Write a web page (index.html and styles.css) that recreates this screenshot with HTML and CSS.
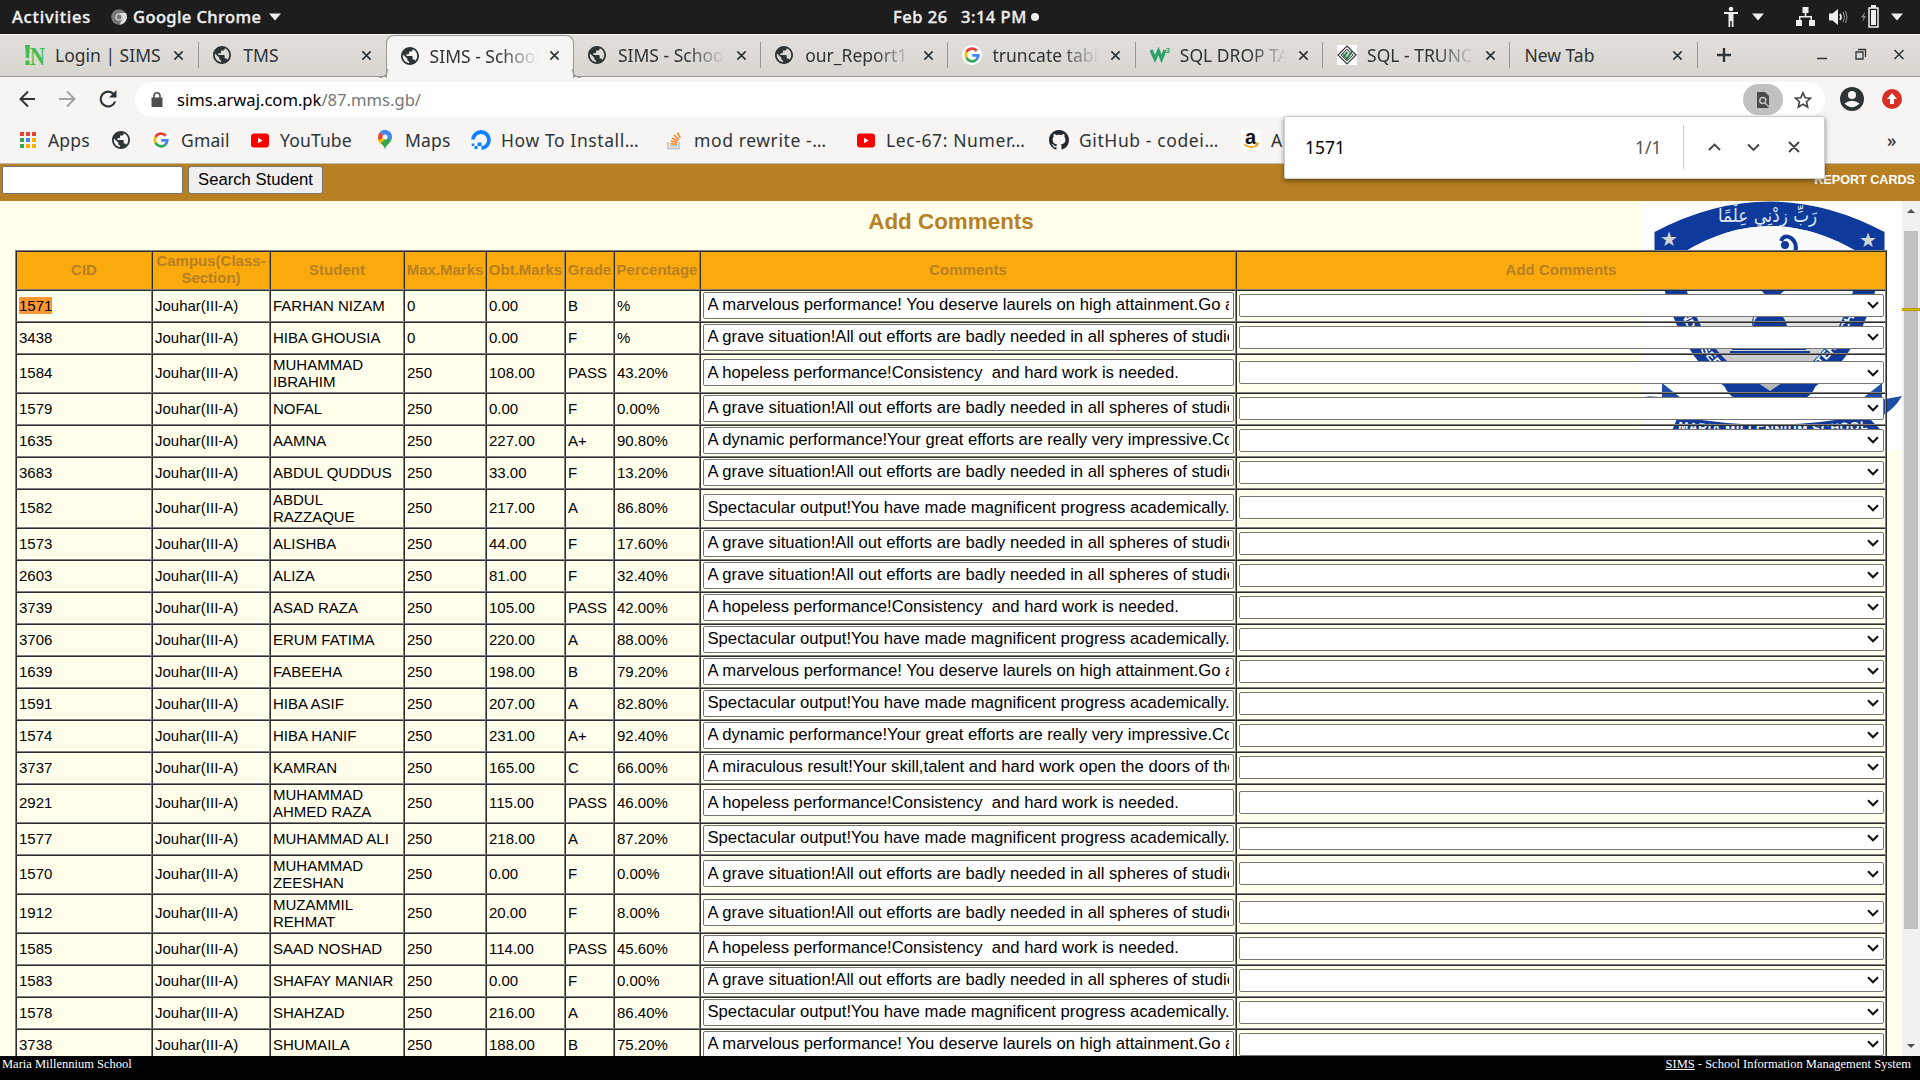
FILE: index.html
```html
<!DOCTYPE html>
<html lang="en">
<head>
<meta charset="utf-8">
<title>SIMS - School Information Management System</title>
<link rel="stylesheet" href="styles.css">
</head>
<body>
<svg class="defs" width="0" height="0">
  <symbol id="globe" viewBox="2 2 20 20"><path d="M12 2C6.480 2 2 6.480 2 12s4.480 10 10 10 10-4.480 10-10S17.520 2 12 2zm-1 17.930c-3.950-.490-7-3.850-7-7.930 0-.620.080-1.210.210-1.790L9 15v1c0 1.100.900 2 2 2v1.930zm6.900-2.540c-.260-.810-1-1.390-1.900-1.390h-1v-3c0-.550-.450-1-1-1H8v-2h2c.550 0 1-.450 1-1V7h2c1.100 0 2-.900 2-2v-.410c2.930 1.190 5 4.060 5 7.410 0 2.080-.800 3.970-2.100 5.390z" fill="#2e3436"/></symbol>
  <symbol id="google" viewBox="0 0 20 20"><circle cx="10" cy="10" r="10" fill="#fff"/><g fill="none" stroke-width="2.800"><path d="M14.800 5.700A6.300 6.300 0 0 0 4.500 7.100" stroke="#ea4335"/><path d="M4.500 7.100a6.300 6.300 0 0 0 0 5.800" stroke="#fbbc05"/><path d="M4.500 12.900A6.300 6.300 0 0 0 14.300 14.700" stroke="#34a853"/><path d="M14.300 14.700A6.300 6.300 0 0 0 16.300 10.300H10.200" stroke="#4285f4"/></g></symbol>
  <symbol id="youtube" viewBox="0 0 20 20"><rect x="1" y="3.500" width="18" height="14" rx="3" fill="#f00"/><path d="M8 7.800v5.400l4.600-2.700z" fill="#fff"/></symbol>
  <symbol id="x" viewBox="0 0 12 12"><path d="M1.500 1.500l9 9m0-9l-9 9" fill="none" stroke="currentColor" stroke-width="1.800"/></symbol>
  <symbol id="tri" viewBox="0 0 12 8"><path d="M0 .5h12L6 7.500z" fill="#eee"/></symbol>
  <symbol id="chev" viewBox="0 0 12 8"><path d="M1 1.200l5 5 5-5" fill="none" stroke="#111" stroke-width="2.100"/></symbol>
</svg>

<header class="panel">
  <span class="panel-left"><b>Activities</b>
    <svg width="16" height="16" viewBox="0 0 16 16"><circle cx="8" cy="8" r="7.800" fill="#777"/><path d="M8 4h7a8 8 0 0 1-6.500 11.800l3-6z" fill="#ddd"/><circle cx="8" cy="8" r="3.600" fill="#ddd"/><circle cx="8" cy="8" r="2.500" fill="#777"/></svg>
    <b class="app-name">Google Chrome</b><svg width="12" height="8"><use href="#tri"/></svg></span>
  <span class="clock"><b>Feb 26</b><b>3:14 PM</b><i></i></span>
  <span class="tray">
    <svg width="16" height="22" viewBox="0 0 16 22" fill="#eee"><circle cx="8" cy="3" r="2.300"/><path d="M1 6h14v2h-4.500v13H8.800v-6H7.200v6H5.500V8H1z"/></svg>
    <svg class="t1" width="12" height="8"><use href="#tri"/></svg>
    <svg class="t2" width="19" height="20" viewBox="0 0 19 20" fill="#eee"><path d="M6.500 0h6v6h-2.200v3h5.700v4h3v6h-6v-6h1.500v-2.500h-10V13H6v6H0v-6h3V9h5.700V6H6.500z"/></svg>
    <svg class="t3" width="19" height="18" viewBox="0 0 19 18" fill="#eee"><path d="M0 5.500h3.500L9 1v16l-5.500-4.500H0z"/><path d="M11 6q2 3 0 6" fill="none" stroke="#eee" stroke-width="1.700"/><path d="M14 4q3 5 0 10M16.500 3q3 6 0 12" fill="none" stroke="#999" stroke-width="1"/></svg>
    <svg class="t4" width="18" height="23" viewBox="0 0 18 23"><path d="M4 7L0 12.500h2.500L1.500 17 5 11H3z" fill="#888"/><path d="M8 3h9v19H8z" fill="none" stroke="#eee" stroke-width="1.500"/><path d="M10 0h5v3h-5zM10 5h5v15h-5z" fill="#eee"/></svg>
    <svg class="t5" width="12" height="8"><use href="#tri"/></svg>
  </span>
</header>

<nav class="tabs">
  <div class="tab"><svg width="20" height="20" viewBox="0 0 20 20"><path d="M0 0h5l-1 13H1zM.5 15.500h4V20h-4z" fill="#3fbf4f"/><text x="5" y="19.500" class="fav-n" textLength="15" lengthAdjust="spacingAndGlyphs">N</text></svg><span>Login | SIMS</span><svg class="close"><use href="#x"/></svg></div>
  <div class="tab plain"><svg width="18" height="18"><use href="#globe"/></svg><span>TMS</span><svg class="close"><use href="#x"/></svg></div>
  <div class="tab active"><svg width="18" height="18"><use href="#globe"/></svg><span>SIMS - School</span><svg class="close"><use href="#x"/></svg></div>
  <div class="tab"><svg width="18" height="18"><use href="#globe"/></svg><span>SIMS - School</span><svg class="close"><use href="#x"/></svg></div>
  <div class="tab"><svg width="18" height="18"><use href="#globe"/></svg><span>our_Report1</span><svg class="close"><use href="#x"/></svg></div>
  <div class="tab"><svg width="20" height="20"><use href="#google"/></svg><span>truncate table</span><svg class="close"><use href="#x"/></svg></div>
  <div class="tab"><svg width="20" height="20" viewBox="0 0 20 20"><path d="M1 5l4 9 3.500-8 3 8 3.500-9" fill="none" stroke="#2aa36b" stroke-width="3.200"/><text x="15.500" y="8" class="fav-3">3</text></svg><span>SQL DROP TABLE</span><svg class="close"><use href="#x"/></svg></div>
  <div class="tab"><svg width="20" height="20" viewBox="0 0 20 20"><path d="M0 0h20v20H0z" fill="#fff"/><path d="M10 1l9 9-9 9-9-9z" fill="none" stroke="#333" stroke-width="1.200"/><path d="M10 4l6 6-6 6-6-6z" fill="#c9d3cb" stroke="#444"/><path d="M6 9l4 5 5-8M7 12l3-5" fill="none" stroke="#2e7d4f" stroke-width="1.800"/></svg><span>SQL - TRUNCATE</span><svg class="close"><use href="#x"/></svg></div>
  <div class="tab"><span>New Tab</span><svg class="close"><use href="#x"/></svg></div>
  <svg class="plus" width="16" height="16" viewBox="0 0 16 16"><path d="M8 1v14M1 8h14" stroke="#2e3436" stroke-width="2.400"/></svg>
  <svg class="winctl" width="90" height="20" viewBox="0 0 90 20" fill="none" stroke="#2e3436" stroke-width="1.300"><path d="M1 13.500h10M40 7h7v7h-7zM42 4.500h7.500V12" /><path d="M78.500 5l9 9m0-9l-9 9" stroke-width="1.500"/></svg>
</nav>

<div class="toolbar">
  <svg class="navs" width="100" height="20" viewBox="0 0 100 20" fill="none" stroke-width="2"><path d="M16 10H1.500M9 2.500L1.500 10 9 17.500" stroke="#2e3436"/><path d="M40 10h15.500M48 2.500l7.500 7.500-7.500 7.500" stroke="#a2a3a2"/><path d="M94.500 5a7.400 7.400 0 1 0 1.600 7.500" stroke="#2e3436" stroke-width="2.200"/><path d="M97.500 1v7.500H90z" fill="#2e3436"/></svg>
  <div class="omnibox">
    <svg width="12" height="15" viewBox="0 0 12 15"><path d="M.5 5.500h11V15H.5z" fill="#4d4d4d"/><path d="M3 6V3.800a3 3 0 0 1 6 0V6" fill="none" stroke="#4d4d4d" stroke-width="1.600"/></svg>
    <span class="url">sims.arwaj.com.pk<em>/87.mms.gb/</em></span>
    <span class="findpill"><svg width="14" height="18" viewBox="0 0 14 18"><path d="M1 1h8l4 4v12H1z" fill="#4a4a4a"/><circle cx="6.800" cy="9.500" r="3" fill="none" stroke="#c1c1c1" stroke-width="1.500"/><path d="M9 12l4 4" stroke="#c1c1c1" stroke-width="1.500"/></svg></span>
    <svg class="star" width="18" height="18" viewBox="0 0 18 18"><path d="M9 1.800l2.200 4.900 5.300.5-4 3.500 1.200 5.300L9 13.200 4.300 16l1.200-5.300-4-3.500 5.300-.5z" fill="none" stroke="#444" stroke-width="1.600"/></svg>
  </div>
  <svg class="avatar" width="24" height="24" viewBox="0 0 24 24"><circle cx="12" cy="12" r="12" fill="#2e3436"/><circle cx="12" cy="8" r="4" fill="#f6f5f4"/><path d="M4.500 16.500q7.500-5.500 15 0-7.500 7.500-15 0z" fill="#f6f5f4"/></svg>
  <svg width="20" height="20" viewBox="0 0 20 20"><circle cx="10" cy="10" r="10" fill="#d93025"/><path d="M10 4l5 6h-3v5H8v-5H5z" fill="#fff"/></svg>
</div>

<div class="bookmarks">
  <a><svg viewBox="0 0 20 20"><path d="M2 2h4v4H2zM8 2h4v4H8zM14 2h4v4h-4z" fill="#ea4335"/><path d="M2 8h4v4H2zM2 14h4v4H2z" fill="#34a853"/><path d="M8 8h4v4H8z" fill="#4285f4"/><path d="M14 8h4v4h-4zM8 14h4v4H8zM14 14h4v4h-4z" fill="#fbac05"/></svg>Apps</a>
  <a><svg class="small"><use href="#globe"/></svg></a>
  <a><svg><use href="#google"/></svg>Gmail</a>
  <a><svg><use href="#youtube"/></svg>YouTube</a>
  <a><svg viewBox="0 0 20 20"><path d="M10 20c0-5-7-7-7-13h14c0 6-7 8-7 13z" fill="#34a853"/><path d="M3.200 8.500L10 6v3l-5 5Q3 11 3.200 8.500z" fill="#fbbc05"/><path d="M4 10A7 7 0 0 1 5 2l5 5z" fill="#ea4335"/><path d="M5 2a7 7 0 0 1 12 5l-3 3-6-5z" fill="#4285f4"/><circle cx="10" cy="7" r="2.500" fill="#fff"/></svg>Maps</a>
  <a class="wide"><svg viewBox="0 0 20 20"><path d="M2 9.500A8 8 0 1 1 10.500 18" fill="none" stroke="#0f80ff" stroke-width="3.800"/><path d="M6.500 12.500h4V16h-4zM3.500 16h3v3h-3zM.8 13.500h2.500v2.500H.8z" fill="#0f80ff"/></svg>How To Install…</a>
  <a class="wide"><svg viewBox="0 0 20 20"><path d="M4 12v6.500h11V12M6 16h7" fill="none" stroke="#bcbbbb" stroke-width="1.500"/><path d="M6.500 13.800l6.500.5M6.800 11l6.400 1.400M8 8l5.800 2.900M10 5l4.900 4.500M13.500 2.500l2.700 5.500" stroke="#f48024" stroke-width="1.600"/></svg>mod rewrite -…</a>
  <a class="wide"><svg><use href="#youtube"/></svg>Lec-67: Numer…</a>
  <a class="wide"><svg viewBox="0 0 16 16"><path fill="#24292e" d="M8 0C3.580 0 0 3.580 0 8c0 3.540 2.290 6.530 5.470 7.590.4.070.55-.17.55-.38 0-.19-.01-.82-.01-1.490-2.010.37-2.530-.49-2.690-.94-.09-.23-.48-.94-.82-1.130-.28-.15-.68-.52-.01-.53.63-.01 1.080.58 1.230.82.72 1.210 1.870.87 2.330.66.07-.52.28-.87.51-1.070-1.780-.2-3.640-.89-3.640-3.950 0-.87.31-1.590.82-2.150-.08-.2-.36-1.020.08-2.120 0 0 .67-.21 2.200.82.64-.18 1.320-.27 2-.27s1.360.09 2 .27c1.530-1.040 2.200-.82 2.200-.82.44 1.100.16 1.920.08 2.120.51.56.82 1.270.82 2.150 0 3.070-1.870 3.750-3.650 3.950.29.25.54.73.54 1.480 0 1.070-.01 1.930-.01 2.200 0 .21.15.46.55.38A8.010 8.010 0 0 0 16 8c0-4.420-3.580-8-8-8z"/></svg>GitHub - codei…</a>
  <a><svg viewBox="0 0 20 20"><rect width="20" height="20" rx="3" fill="#fff"/><text x="4" y="14" class="fav-a">a</text><path d="M3 14.500q7 5 13 .5M14 14l3-.5-1 3" fill="none" stroke="#f90" stroke-width="1.500"/></svg>A</a>
  <b class="more">»</b>
</div>

<div class="findbar">
  <span>1571</span><em>1/1</em>
  <svg width="110" height="44" viewBox="0 0 110 44" fill="none" stroke="#444" stroke-width="1.900"><path d="M.5 0v44" stroke="#ccc" stroke-width="1"/><path d="M26 25l5.500-5.500L37 25M65 19.500l5.500 5.500 5.500-5.500M106 17l10 10m0-10l-10 10"/></svg>
</div>

<div class="searchbar"><input class="sbox" type="text"><button>Search Student</button><b>REPORT CARDS</b></div>

<div class="viewport">
  <main class="page">
    <svg class="crest" width="260" height="250" viewBox="2 6 260 250">
      <defs><linearGradient id="g" x1="0" y1="0" x2="0" y2="1"><stop offset="0" stop-color="#fff"/><stop offset="1" stop-color="#b4b4b4"/></linearGradient>
      <path id="arc" d="M38 235Q130 243 230 234"/></defs>
      <path d="M2 6h260v250H2z" fill="#fff"/>
      <path d="M22 86Q40 160 84 191L130 222 176 191Q220 160 238 86z" fill="#0d3a9b"/>
      <path d="M44 86Q58 140 90 169L130 196 170 169Q202 140 216 86z" fill="url(#g)"/>
      <path d="M14.500 37Q130-24 244.500 37v20H218Q130 5 44 57H14.500z" fill="#0d3a9b"/>
      <path d="M45 57Q130 5 217 57z" fill="#fafafa"/>
      <text x="78" y="27" class="arabic" textLength="99" lengthAdjust="spacingAndGlyphs">رَبِّ زِدْنِي عِلْمًا</text>
      <text x="20" y="51" class="st">★</text><text x="219" y="52" class="st">★</text>
      <path d="M141 46q3-7 10-3 7 5 4 14" fill="none" stroke="#0d3a9b" stroke-width="4"/><circle cx="145" cy="50" r="4" fill="#0d3a9b"/>
      <path d="M122 96h22l-6 5h-12z" fill="#0d3a9b"/>
      <ellipse cx="130" cy="133" rx="17" ry="17" fill="#0d3a9b"/>
      <path d="M113 132q-2-10 4-14" fill="none" stroke="#0d3a9b"/>
      <path d="M86 151h82M92 154h74M90 157h80" stroke="#0d3a9b" stroke-width="2"/>
      <g class="band"><text x="33" y="103" transform="rotate(64 33 103)">OUND</text><text x="60" y="155" transform="rotate(48 60 155)">SERVE</text><text x="181" y="171" transform="rotate(-48 181 171)">TER</text><text x="207" y="137" transform="rotate(-64 207 137)">CHAR</text></g>
      <path d="M22 188v21l28 1zM242 188v21l-28 1z" fill="#1d4fa8"/>
      <path d="M262 201l-22 4v17q14-7 22-21zM4 201l16 1v2z" fill="#1d4fa8"/>
      <path d="M34 212q96 26 192 0l6 22q-102 12-204 0z" fill="#fff"/>
      <path d="M84 190L130 222 176 190Q168 212 130 210 92 212 84 190z" fill="#0d3a9b"/>
      <path d="M38 221q92 18 188-1l14 14q-110 12-208 2z" fill="#0d3a9b"/>
      <path d="M54 218q74 8 152 0-76 14-152 0z" fill="#fff"/>
      <text class="band"><textPath href="#arc" textLength="190">MARIA MILLENNIUM SCHOOL</textPath></text>
    </svg>
    <h1>Add Comments</h1>
    <table>
      <colgroup><col class="c1"><col class="c2"><col class="c3"><col class="c4"><col class="c5"><col class="c6"><col class="c7"><col class="c8"><col class="c9"></colgroup>
      <thead><tr><th>CID</th><th>Campus(Class-Section)</th><th>Student</th><th>Max.Marks</th><th>Obt.Marks</th><th>Grade</th><th>Percentage</th><th>Comments</th><th>Add Comments</th></tr></thead>
      <tbody id="rows"></tbody>
    </table>
  </main>
  <aside class="scroll"><svg width="10" height="6" viewBox="0 0 10 6"><path d="M1 5l4-4 4 4z" fill="#505050"/></svg><i class="thumb"></i><i class="hit"></i><svg class="down" width="10" height="6" viewBox="0 0 10 6"><path d="M1 1l4 4 4-4z" fill="#505050"/></svg></aside>
</div>
<footer><span>Maria Millennium School</span><span><u>SIMS</u> - School Information Management System</span></footer>
<script src="script.js"></script>
</body>
</html>
```
FILE: styles.css
```css
*{box-sizing:border-box}
body{margin:0;width:1920px;height:1080px;overflow:hidden;display:flex;flex-direction:column;font-family:"Liberation Sans",sans-serif;background:#ffffec;position:relative}
svg{flex:none;display:block}
.defs{position:absolute}
.panel,.tabs,.toolbar,.bookmarks,.findbar{font-family:"Noto Sans","Open Sans",sans-serif}
em{font-style:normal}

.panel{height:34px;flex:none;background:#1d1d1d;color:#eee;font-size:16.500px;display:grid;grid-template-columns:893px 838px 1fr;align-items:center;padding-bottom:1px}
.panel b{font-weight:500;-webkit-text-stroke:.35px #eee}
.panel-left{display:flex;align-items:center;padding-left:12px;letter-spacing:.25px}
.panel-left svg{margin-left:6px}
.panel-left b{width:93px;white-space:nowrap;letter-spacing:.8px}
.panel-left .app-name{width:130px;margin-left:6px;letter-spacing:.4px}
.clock{display:flex;align-items:center}
.clock b{width:68px;white-space:nowrap;letter-spacing:.5px}
.clock i{width:8px;height:8px;border-radius:50%;background:#eee;margin-left:3px}
.clock b + b{width:67px}
.tray{display:flex;align-items:center;margin-left:-8px}
.t1{margin-left:13px}.t2{margin-left:32px}.t3{margin-left:14px}.t4{margin-left:13px}.t5{margin-left:12px}

.tabs{height:43px;flex:none;display:flex;padding-left:12px;padding-bottom:1px;background:linear-gradient(#e2dfdb,#d9d6d0);border-top:1px solid #f4f3f1;border-bottom:1px solid #999892;color:#2e3436;font-size:17.500px;align-items:center}
.tab{width:187.300px;height:26px;display:flex;align-items:center;padding-left:14px;border-right:1px solid #9a9791;flex:none;position:relative}
.tab span{width:107px;margin-left:10px;white-space:nowrap;overflow:hidden;-webkit-mask:linear-gradient(90deg,#000 65%,transparent);mask:linear-gradient(90deg,#000 65%,transparent)}
.tab svg[width="18"]{margin-right:2px}
.tab:first-child svg:first-child{margin-left:-1px}
.tab:first-child span,.tab:nth-child(9) span,.plain span{-webkit-mask:none;mask:none}
.tab span:first-child{margin-left:0;width:137px}
.tab .close{width:11px;height:11px;margin-left:11px}
.plain{border-right-color:transparent}
.active{width:188.300px;margin-left:-1px;height:43px;background:#f6f5f4;border:1px solid #999892;border-bottom:0;border-radius:8px 8px 0 0;top:1px;padding-bottom:2px}
.active span{margin-left:9px;width:108px}
.active::before,.active::after{content:"";position:absolute;bottom:0;width:8px;height:8px;border-bottom:1px solid #999892}
.active::before{left:-8px;border-right:1px solid #999892;border-bottom-right-radius:8px}
.active::after{right:-8px;border-left:1px solid #999892;border-bottom-left-radius:8px}
.plus{margin-left:18px}
.winctl{margin-left:84px;margin-right:-8px}
.fav-n{font:bold 25px "Liberation Serif";fill:#3fbf4f}
.fav-3{font:bold 8px "Liberation Sans";fill:#2aa36b}
.fav-a{font:bold 20px "Liberation Sans";fill:#111}

.toolbar{height:44px;flex:none;background:#f6f5f4;display:flex;align-items:center;padding:0 18px 0 19px}
.omnibox{margin-left:16px;width:1690px;height:35px;margin-top:1px;border-radius:18px;background:#fff;display:flex;align-items:center;padding-left:16px;font-size:16.600px;color:#000}
.url{margin-left:14px;width:1566px}
.url em{color:#777}
.findpill{width:40px;height:31px;border-radius:16px;background:#c1c1c1;display:grid;place-items:center}
.star{margin-left:11px}
.avatar{margin-left:15px;margin-right:18px}

.bookmarks{height:43px;flex:none;background:#f6f5f4;border-bottom:1px solid #bdb9b4;display:grid;grid-template-columns:94px 39px 99px 125px 96px 193px 192px 193px 192px 646px 1fr;align-items:center;padding-left:18px;color:#2e3436;font-size:17.500px;letter-spacing:.15px;padding-bottom:4px}
.bookmarks a{display:flex;align-items:center;gap:10px;white-space:nowrap}
.bookmarks .wide{letter-spacing:.6px}
.bookmarks svg{width:20px;height:20px}
.bookmarks .small{width:18px;height:18px}
.more{font-weight:500}

.findbar{position:absolute;left:1284px;top:116px;width:541px;height:63px;background:#fff;border:1px solid #ccc;border-radius:2px;box-shadow:0 2px 5px rgba(0,0,0,.45);display:flex;align-items:center;padding:0 0 2px 20px;font-size:17.500px;z-index:2}
.findbar span{width:330px}
.findbar em{color:#555;width:48px}
.findbar svg{overflow:visible}

.searchbar{height:37px;flex:none;background:#b78023;display:flex;align-items:flex-start;padding:2px 5px 0 2px}
.sbox{width:181px;height:28px;border:1px solid #767676;border-radius:2px;background:#fff;padding:0}
.searchbar button{width:135px;height:28px;margin-left:5px;border:1px solid #767676;border-radius:3px;background:#efefef;font:16.670px "Liberation Sans",sans-serif;padding:0;color:#000}
.searchbar b{margin-left:auto;color:#fff;font-size:12.600px;line-height:15px;padding-top:7px}

.viewport{height:855px;flex:none;display:flex;overflow:hidden}
.page{width:1902px;height:855px;overflow:hidden;position:relative;padding:0 15px}
.crest{position:absolute;left:1642px;top:0}
.arabic{font:19px "DejaVu Sans",sans-serif;fill:#dfe5f2;direction:rtl;text-anchor:end}
.st{font:20px "DejaVu Sans",sans-serif;fill:#d5d5d5}
.band{font:bold 12px "Liberation Sans",sans-serif;fill:#fff}
h1{margin:0;height:49px;line-height:41px;font-size:22.400px;text-align:center;color:#b78023;position:relative}
table{position:relative;width:1872px;table-layout:fixed;border-collapse:separate;border-spacing:0;border:1px solid;border-color:#808080 #2c2c2c #2c2c2c #808080;font-size:15px;line-height:17px;color:#000}
th,td{border:1px solid;border-color:#2c2c2c #808080 #808080 #2c2c2c;padding:0 0 2px 2px}
tr{height:32px}
th{height:39px;background:#fbaa0e;color:#b78023;padding:0 1px 3px}
.c1{width:136px}.c2{width:118px}.c3{width:134px}.c4{width:82px}.c5{width:79px}.c6{width:49px}.c7{width:86px}.c8{width:536px}.c9{width:650px}
.tall{height:39px}
.comment{display:block;width:531px;height:27px;border:1px solid #767676;border-radius:2px;background:#fff;padding:0 4px 0 3.500px;font:16.670px "Liberation Sans",sans-serif;color:#000}
.pick{display:grid;width:645px;height:23px;align-items:center}
.pick select,.pick svg{grid-area:1/1}
.pick select{width:645px;height:23px;border:1px solid #767676;border-radius:2px;background:#fff;appearance:none}
.pick svg{justify-self:end;margin-right:5px;pointer-events:none}
mark{background:#ff9632;color:#000;display:inline-block}
.scroll{width:18px;background:#f1f1f1;position:relative;display:flex;flex-direction:column;align-items:center;padding:7px 0 7px}
.thumb{width:14px;height:698px;background:#c1c1c1;margin-top:17px}
.hit{position:absolute;left:0;top:107px;width:18px;height:3px;background:#e0c000;border:1px solid #b09500;border-width:1px 0}
.down{margin-top:auto}

footer{height:24px;flex:none;background:#000;color:#fff;display:flex;justify-content:space-between;padding:1px 9px 0 2px;font:12.500px/15px "Liberation Serif",serif}
```
FILE: script.js
```js
const comments = {
  m: 'A marvelous performance! You deserve laurels on high attainment.Go ahead',
  g: 'A grave situation!All out efforts are badly needed in all spheres of studies.',
  h: 'A hopeless performance!Consistency  and hard work is needed.',
  d: 'A dynamic performance!Your great efforts are really very impressive.Continue',
  s: 'Spectacular output!You have made magnificent progress academically.',
  r: 'A miraculous result!Your skill,talent and hard work open the doors of the future'
};
const rows = [
  ['1571', 'FARHAN NIZAM', '0', '0.00', 'B', '%', 'm'],
  ['3438', 'HIBA GHOUSIA', '0', '0.00', 'F', '%', 'g'],
  ['1584', 'MUHAMMAD<br>IBRAHIM', '250', '108.00', 'PASS', '43.20%', 'h'],
  ['1579', 'NOFAL', '250', '0.00', 'F', '0.00%', 'g'],
  ['1635', 'AAMNA', '250', '227.00', 'A+', '90.80%', 'd'],
  ['3683', 'ABDUL QUDDUS', '250', '33.00', 'F', '13.20%', 'g'],
  ['1582', 'ABDUL<br>RAZZAQUE', '250', '217.00', 'A', '86.80%', 's'],
  ['1573', 'ALISHBA', '250', '44.00', 'F', '17.60%', 'g'],
  ['2603', 'ALIZA', '250', '81.00', 'F', '32.40%', 'g'],
  ['3739', 'ASAD RAZA', '250', '105.00', 'PASS', '42.00%', 'h'],
  ['3706', 'ERUM FATIMA', '250', '220.00', 'A', '88.00%', 's'],
  ['1639', 'FABEEHA', '250', '198.00', 'B', '79.20%', 'm'],
  ['1591', 'HIBA ASIF', '250', '207.00', 'A', '82.80%', 's'],
  ['1574', 'HIBA HANIF', '250', '231.00', 'A+', '92.40%', 'd'],
  ['3737', 'KAMRAN', '250', '165.00', 'C', '66.00%', 'r'],
  ['2921', 'MUHAMMAD<br>AHMED RAZA', '250', '115.00', 'PASS', '46.00%', 'h'],
  ['1577', 'MUHAMMAD ALI', '250', '218.00', 'A', '87.20%', 's'],
  ['1570', 'MUHAMMAD<br>ZEESHAN', '250', '0.00', 'F', '0.00%', 'g'],
  ['1912', 'MUZAMMIL<br>REHMAT', '250', '20.00', 'F', '8.00%', 'g'],
  ['1585', 'SAAD NOSHAD', '250', '114.00', 'PASS', '45.60%', 'h'],
  ['1583', 'SHAFAY MANIAR', '250', '0.00', 'F', '0.00%', 'g'],
  ['1578', 'SHAHZAD', '250', '216.00', 'A', '86.40%', 's'],
  ['3738', 'SHUMAILA', '250', '188.00', 'B', '75.20%', 'm']
];
document.getElementById('rows').innerHTML = rows.map(([id, name, max, obt, grade, pct, c], i) => `
  <tr class="${name.includes('<br>') ? 'tall' : ''}">
    <td>${i ? id : `<mark>${id}</mark>`}</td><td>Jouhar(III-A)</td><td>${name}</td><td>${max}</td><td>${obt}</td><td>${grade}</td><td>${pct}</td>
    <td><input class="comment" value="${comments[c]}"></td>
    <td><span class="pick"><select></select><svg width="12" height="8"><use href="#chev"/></svg></span></td>
  </tr>`).join('');
```
